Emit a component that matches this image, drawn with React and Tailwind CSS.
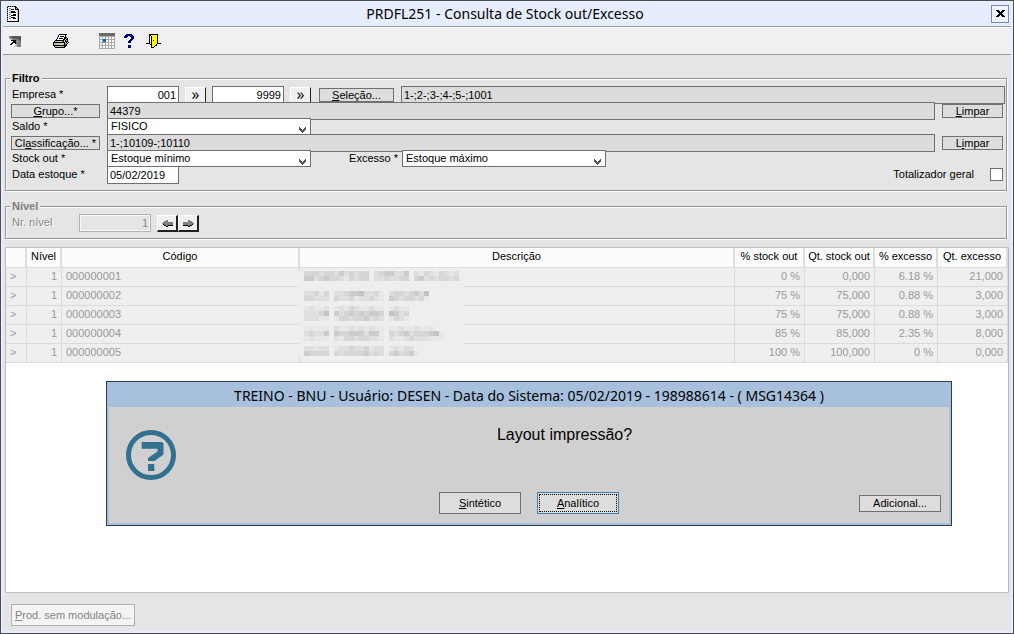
import React, { useState } from 'react';

const palette = {
    k: '#000000',
    w: '#ffffff',
    g: '#808080',
    d: '#585858',
    s: '#c3c3c3',
    y: '#ffff00',
    n: '#000080',
    b: '#0a64a8',
    1: '#e7e7e7',
    2: '#dfdfdf',
    3: '#d6d6d6',
    4: '#cccccc',
    5: '#c2c2c2',
};

const reportIcon = [
    'gkgkgkgkk...',
    'kwwwwwwwkk..',
    'gwggwwwwksk.',
    'kwwwkkkwkkkk',
    'gwggwwwwwwsk',
    'kwwwkkkkwwsk',
    'gwggkkkkkwsk',
    'kwwwwwwwwwsk',
    'gwggwwkkkwsk',
    'kwwwkkkkkwsk',
    'gwggwwwwwwsk',
    'kwwwkkkkwwsk',
    'gwggwwkkkwsk',
    'kwwwwwwwwwsk',
    'gwwwwwwwwwsk',
    'kkkkkkkkkkkk',
];

const shortcutIcon = [
    'ggdddddddddd',
    'gggddddddddd',
    'sggggddddddd',
    'wssggggggddd',
    'wwkkkkkggggd',
    'wwwwkkkgsggg',
    'wwwkkkkggggg',
    'wwkkwwkggggg',
    'wkkwwwwsgggg',
    '.wwwwwssgggg',
    '...wwsssgggg',
];

const printerIcon = [
    '......kkkkkkkk..',
    '.....kwwwwwwk...',
    '.....kwkkkkwk...',
    '....kwwwwwwkkk..',
    '....kwkkkkwkksk.',
    '...kwwwwwwkkskk.',
    '..kkkkkkkkksksk.',
    '.ksssssssskskkk.',
    'kkkkkkkkkkkksksk',
    'ksssssssssskgsk.',
    'kssssssyyyskgk..',
    'kkkkkkkkkkkkkk..',
    '.kssssssssskk...',
    '..kkkkkkkkkk....',
];

const doorIcon = [
    '...kkkkkkkkk...',
    '...kkyyyyyyk...',
    '...kwkyyyyyk...',
    '...kwkyyyyyk...',
    '...kwkyyyyyk...',
    '...kwkyyyyyk...',
    '...kwkykyyyk...',
    '...kwkyyyyyk...',
    '...kwkyyyyyk...',
    'kkkkwkyyyyykkkk',
    '....kkyyyyk....',
    '.....kyyykk....',
    '.....kyyk......',
    '.....kkk.......',
];

const helpIcon = [
    '..nnnnnn..',
    '.nnnnnnnn.',
    'nnnn..nnnn',
    'nnn....nnn',
    '.......nnn',
    '......nnn.',
    '.....nnn..',
    '....nnn...',
    '....nnn...',
    '..........',
    '..........',
    '....nnn...',
    '....nnn...',
    '....nnn...',
];

const closeIcon = [
    'kkk...kkk',
    '.kkk.kkk.',
    '..kkkkk..',
    '...kkk...',
    '..kkkkk..',
    '.kkk.kkk.',
    'kkk...kkk',
];

const leftIcon = [
    '....gg.....',
    '..gggg.....',
    '.gggggggggg',
    'ggggggggggg',
    '.kggggggggg',
    '..kkggkkkkk',
    '....kk.....',
];

const rightIcon = [
    '.....gg....',
    '.....gggg..',
    'gggggggggg.',
    'ggggggggggg',
    'gggggggggk.',
    'kkkkkggkk..',
    '.....kk....',
];

const arrowIcon = [
    'd.....d.',
    'dd...dd.',
    'ddd.ddd.',
    '.ddddd..',
    '..ddd...',
    '...d....',
];

const redacted = [
    '.3332332423233.2344224.213213212.',
    '.4423433213233.2232233.342323323.',
    '.................................',
    '.................................',
    '.22313.2234452231.23323425.......',
    '.33222.3223122321.43233231.......',
    '.................................',
    '.12112.1213211211.1211...........',
    '.22235.4234343443.5423...........',
    '.22211.1332334232.1321...........',
    '.................................',
    '.11111.2112121211.112112111......',
    '.23224.4334442441.32342333451....',
    '.12111.2133233221.21123222111....',
    '.................................',
    '.22122.1223223122.12122..........',
    '.43333.3233334232.342341.........',
];

const rows = [
    ['000000001', '0 %', '0,000', '6.18 %', '21,000'],
    ['000000002', '75 %', '75,000', '0.88 %', '3,000'],
    ['000000003', '75 %', '75,000', '0.88 %', '3,000'],
    ['000000004', '85 %', '85,000', '2.35 %', '8,000'],
    ['000000005', '100 %', '100,000', '0 %', '0,000'],
];

const PixelArt = ({ map, size = 1, background }) => (
    <svg
        width={map[0].length * size}
        height={map.length * size}
        viewBox={`0 0 ${map[0].length} ${map.length}`}
        shapeRendering="crispEdges"
        aria-hidden="true"
        className="block shrink-0"
    >
        {background && <rect width="100%" height="100%" fill={background} />}
        {map.map((line, y) =>
            line.split('').map((c, x) =>
                c === '.' ? null : <rect key={`${x}-${y}`} x={x} y={y} width="1" height="1" fill={palette[c]} />
            )
        )}
    </svg>
);

const CalendarIcon = () => (
    <svg width="16" height="16" viewBox="0 0 16 16" shapeRendering="crispEdges" aria-hidden="true">
        <rect width="16" height="16" fill="#a9a9a9" />
        <rect width="16" height="3" fill="#6b6b6b" />
        {[3, 6, 9, 12].map((y) =>
            [1, 4, 7, 10, 13].map((x) => <rect key={`${x}-${y}`} x={x} y={y + 1} width="2" height="2" fill="#f8f8f8" />)
        )}
        <rect x="4" y="6" width="3" height="3" fill={palette.b} />
    </svg>
);

const FlatButton = ({ className, border = 'border-[#707070]', children, ...props }) => (
    <button className={`border ${border} bg-[#dddddd] text-center whitespace-nowrap ${className}`} {...props}>
        {children}
    </button>
);

const RaisedButton = ({ className, children, ...props }) => (
    <button
        className={`flex items-center justify-center border-t border-l border-r-2 border-b-2 border-t-white border-l-white border-r-[#202020] border-b-[#202020] bg-[#f0f0f0] ${className}`}
        {...props}
    >
        {children}
    </button>
);

const SearchButton = (props) => (
    <button
        className="mt-px ml-1.5 flex h-4 w-[21px] items-center justify-center border-t border-r border-b border-l border-t-white border-r-[#202020] border-b-[#a0a0a0] border-l-white bg-[#f0f0f0] pb-0.5 font-['Open_Sans',sans-serif] text-base leading-3"
        {...props}
    >
        »
    </button>
);

const Field = ({ className, border = 'border-[#707070]', ...props }) => (
    <input type="text" className={`h-[18px] border ${border} px-0.5 outline-none ${className}`} {...props} />
);

const Select = ({ id, option }) => (
    <div className="relative h-[17px] w-[204px] shrink-0 border border-[#707070] bg-white">
        <select id={id} className="block h-[15px] w-full appearance-none bg-white pl-[3px] leading-[15px] outline-none">
            <option>{option}</option>
        </select>
        <span className="pointer-events-none absolute right-[3px] bottom-px">
            <PixelArt map={arrowIcon} />
        </span>
    </div>
);

const Group = ({ title, titleClass, className, children }) => (
    <fieldset
        className={`mr-1 ml-0.5 border border-[#959595] pt-px pr-px pl-1 shadow-[1px_1px_0_#ffffff,inset_1px_1px_0_#ffffff] ${className}`}
    >
        <legend className={`bg-[#e5e5e5] px-0.5 text-[11px] leading-[14px] font-bold ${titleClass}`}>{title}</legend>
        {children}
    </fieldset>
);

const App = () => {
    const [total, setTotal] = useState(false);

    const cell = 'border-r border-b border-[#dadada] px-1 pb-0.5';
    const head = 'border-r-2 border-b border-[#dddddd] bg-[#fcfcfc] pb-[3px] text-center font-normal text-black whitespace-nowrap';

    return (
        <div className="flex min-h-screen flex-col border border-[#4c4c52] bg-[#e6edff] font-['Liberation_Sans',Arial,sans-serif] text-[11px] leading-4 text-black">
            <header className="mx-0.5 flex h-[26px] items-center border-b border-[#999999] pr-0.5 pl-1">
                <PixelArt map={reportIcon} />
                <h1 className="flex-1 text-center font-['Noto_Sans',sans-serif] text-sm">
                    PRDFL251 - Consulta de Stock out/Excesso
                </h1>
                <button
                    aria-label="Fechar"
                    className="flex h-[18px] w-[18px] items-center justify-center border border-[#7f88ab] bg-[#f0f4ff]"
                >
                    <PixelArt map={closeIcon} />
                </button>
            </header>

            <nav className="mx-0.5 flex h-7 items-center border-t border-b border-t-white border-b-[#999999] bg-[#f0f0f0] pl-1.5">
                <button aria-label="Atalho"><PixelArt map={shortcutIcon} /></button>
                <button aria-label="Imprimir" className="ml-8"><PixelArt map={printerIcon} /></button>
                <button aria-label="Calendário" className="ml-[30px]"><CalendarIcon /></button>
                <button aria-label="Ajuda" className="ml-[9px]"><PixelArt map={helpIcon} /></button>
                <button aria-label="Sair" className="ml-3"><PixelArt map={doorIcon} /></button>
            </nav>

            <main className="mx-0.5 mb-0.5 flex flex-1 flex-col bg-[#e5e5e5] pt-4">
                <Group title="Filtro" className="pb-2">
                    <div className="flex h-4 items-start">
                        <label htmlFor="empresa" className="w-[97px] shrink-0 pl-0.5">Empresa *</label>
                        <Field id="empresa" className="w-[72px] bg-white text-right" defaultValue="001" />
                        <SearchButton aria-label="Buscar empresa inicial" />
                        <Field aria-label="Empresa final" className="ml-1.5 w-[72px] bg-white text-right" defaultValue="9999" />
                        <SearchButton aria-label="Buscar empresa final" />
                        <FlatButton className="mt-0.5 ml-2 h-3.5 w-[75px] leading-3"><u>S</u>eleção...</FlatButton>
                        <Field aria-label="Empresas selecionadas" readOnly className="ml-[7px] min-w-0 flex-1 bg-[#dcdcdc]" value="1-;2-;3-;4-;5-;1001" />
                    </div>
                    <div className="flex h-4 items-start">
                        <div className="w-[97px] shrink-0 pl-px">
                            <FlatButton className="mt-0.5 block h-3.5 w-[89px] leading-3"><u>G</u>rupo...*</FlatButton>
                        </div>
                        <Field aria-label="Grupo" readOnly className="min-w-0 flex-1 bg-[#dcdcdc]" value="44379" />
                        <FlatButton className="mt-0.5 mr-0.5 ml-[7px] h-3.5 w-[61px] leading-3"><u>L</u>impar</FlatButton>
                    </div>
                    <div className="flex h-4 items-start">
                        <label htmlFor="saldo" className="w-[97px] shrink-0 pl-0.5">Saldo *</label>
                        <Select id="saldo" option="FISICO" />
                    </div>
                    <div className="flex h-4 items-start">
                        <div className="w-[97px] shrink-0 pl-px">
                            <FlatButton className="mt-0.5 block h-3.5 w-[89px] leading-3">Cl<u>a</u>ssificação... *</FlatButton>
                        </div>
                        <Field aria-label="Classificação" readOnly className="min-w-0 flex-1 bg-[#dcdcdc]" value="1-;10109-;10110" />
                        <FlatButton className="mt-0.5 mr-0.5 ml-[7px] h-3.5 w-[61px] leading-3">L<u>i</u>mpar</FlatButton>
                    </div>
                    <div className="flex h-4 items-start">
                        <label htmlFor="stock" className="w-[97px] shrink-0 pl-0.5">Stock out *</label>
                        <Select id="stock" option="Estoque mínimo" />
                        <label htmlFor="excesso" className="w-[91px] shrink-0 pr-1 text-right">Excesso *</label>
                        <Select id="excesso" option="Estoque máximo" />
                    </div>
                    <div className="flex h-4 items-start">
                        <label htmlFor="data" className="w-[97px] shrink-0 pl-0.5">Data estoque *</label>
                        <Field id="data" className="w-[72px] bg-white" defaultValue="05/02/2019" />
                        <label htmlFor="total" className="ml-auto">Totalizador geral</label>
                        <input
                            id="total"
                            type="checkbox"
                            checked={total}
                            onChange={(e) => setTotal(e.target.checked)}
                            className="mt-0.5 mr-0.5 ml-4 h-[13px] w-[13px] appearance-none border border-[#707070] bg-white checked:bg-[#707070]"
                        />
                    </div>
                </Group>

                <Group title="Nível" titleClass="text-[#808080]" className="mt-2 pb-1.5">
                    <div className="flex h-[18px] items-start text-[#858585]">
                        <label htmlFor="nivel" className="w-[69px] shrink-0 pl-0.5 [text-shadow:1px_1px_0_#ffffff]">Nr. nível</label>
                        <Field id="nivel" readOnly border="border-[#adb2b5]" className="w-[72px] bg-[#e5e5e5] text-right shadow-[inset_0_0_0_1px_#f7f7f7]" value="1" />
                        <RaisedButton aria-label="Nível anterior" className="mt-px ml-1.5 h-[17px] w-[21px]"><PixelArt map={leftIcon} /></RaisedButton>
                        <RaisedButton aria-label="Próximo nível" className="mt-px h-[17px] w-[21px]"><PixelArt map={rightIcon} /></RaisedButton>
                    </div>
                </Group>

                <section className="relative mt-2 mr-0.5 ml-0.5 flex-1 border border-[#bdbdbd] bg-white">
                    <table className="w-full table-fixed border-separate border-spacing-0 text-[#999999]">
                        <colgroup>
                            <col className="w-[21px]" />
                            <col className="w-[35px]" />
                            <col className="w-[238px]" />
                            <col />
                            <col className="w-[70px]" />
                            <col className="w-[70px]" />
                            <col className="w-[63px]" />
                            <col className="w-[70px]" />
                        </colgroup>
                        <thead>
                            <tr className="h-5">
                                <th className={head}></th>
                                <th className={head}>Nível</th>
                                <th className={head}>Código</th>
                                <th className={head}>Descrição</th>
                                <th className={head}>% stock out</th>
                                <th className={head}>Qt. stock out</th>
                                <th className={head}>% excesso</th>
                                <th className={head}>Qt. excesso</th>
                            </tr>
                        </thead>
                        <tbody>
                            {rows.map(([code, pctOut, qtOut, pctExc, qtExc], i) => (
                                <tr key={code} className="h-[19px] bg-[#efefef]">
                                    <td className={cell}>&gt;</td>
                                    <td className={`${cell} text-right`}>1</td>
                                    <td className={cell}>{code}</td>
                                    <td className={`${cell} relative`}>
                                        {i === 0 && (
                                            <div className="absolute top-[3px] -left-px z-10">
                                                <PixelArt map={redacted} size={5} background="#eeeeee" />
                                            </div>
                                        )}
                                    </td>
                                    <td className={`${cell} text-right`}>{pctOut}</td>
                                    <td className={`${cell} text-right`}>{qtOut}</td>
                                    <td className={`${cell} text-right`}>{pctExc}</td>
                                    <td className={`${cell} text-right`}>{qtExc}</td>
                                </tr>
                            ))}
                        </tbody>
                    </table>

                    <div
                        role="dialog"
                        aria-labelledby="dialog-title"
                        className="absolute top-[133px] right-14 left-[100px] z-20 border border-[#2f3b45] bg-[#a6c0dd] px-0.5 pb-0.5"
                    >
                        <h2 id="dialog-title" className="h-[25px] text-center font-['Noto_Sans',sans-serif] text-sm leading-[28px]">
                            TREINO - BNU - Usuário: DESEN - Data do Sistema: 05/02/2019 - 198988614 - ( MSG14364 )
                        </h2>
                        <div className="flex h-[116px] items-start bg-[#d0d0d0] pr-2 pl-[17px]">
                            <svg width="50" height="50" viewBox="0 0 50 50" className="mt-[23px] shrink-0" aria-hidden="true">
                                <circle cx="25" cy="25" r="22.5" fill="none" stroke="#31708f" strokeWidth="5" />
                                <path d="M15.7 12H35Q37.5 12 37.5 14.5V24.5L28.5 31H22V28L31.5 21.5V18.7H15.7ZM22 34H28.3V41H22Z" fill="#31708f" />
                            </svg>
                            <div className="flex flex-1 flex-col pt-4 pl-3">
                                <p className="text-center text-base leading-6">Layout impressão?</p>
                                <div className="mt-[45px] flex items-center">
                                    <div className="flex flex-1 justify-center gap-4 pl-[11px]">
                                        <FlatButton className="h-[22px] w-[82px]"><u>S</u>intético</FlatButton>
                                        <FlatButton border="border-[#3c7fb1]" className="h-[22px] w-[82px] p-px">
                                            <span className="block border border-dotted border-black leading-4"><u>A</u>nalítico</span>
                                        </FlatButton>
                                    </div>
                                    <FlatButton className="h-[17px] w-[82px] leading-[15px]">Adicional...</FlatButton>
                                </div>
                            </div>
                        </div>
                    </div>
                </section>

                <footer className="px-2 pt-[11px] pb-[5px]">
                    <button disabled className="block h-[22px] w-[124px] border border-[#adb2b5] bg-[#f4f4f4] text-[#838383]">
                        <u>P</u>rod. sem modulação...
                    </button>
                </footer>
            </main>
        </div>
    );
};

export default App;
